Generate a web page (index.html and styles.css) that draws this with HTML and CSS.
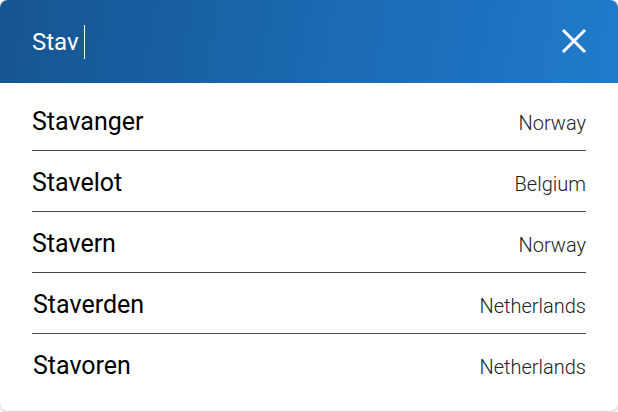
FILE: index.html
```html
<!DOCTYPE html>
<html>
<head>
<meta charset="utf-8">
<link rel="stylesheet" href="styles.css">
</head>
<body>
<div class="card">
  <header class="search">
    <div class="query"><span class="text">Stav</span><span class="caret"></span></div>
    <button class="close" aria-label="Close">
      <svg width="26" height="26" viewBox="0 0 26 26"><path d="M3 3 L23 23 M23 3 L3 23" stroke="#fff" stroke-width="3" stroke-linecap="square" fill="none"/></svg>
    </button>
  </header>
  <ul class="results">
    <li class="row"><span class="name">Stavanger</span><span class="country">Norway</span></li>
    <li class="row"><span class="name">Stavelot</span><span class="country">Belgium</span></li>
    <li class="row"><span class="name">Stavern</span><span class="country">Norway</span></li>
    <li class="row shift"><span class="name">Staverden</span><span class="country">Netherlands</span></li>
    <li class="row shift"><span class="name">Stavoren</span><span class="country">Netherlands</span></li>
  </ul>
</div>
</body>
</html>
```
FILE: styles.css
```css
* { box-sizing: border-box; }
html, body { margin: 0; padding: 0; background: #fff; }
body { width: 618px; height: 412px; overflow: hidden; font-family: Roboto, "Liberation Sans", sans-serif; }
.card {
  width: 618px;
  height: 411px;
  border-radius: 8px;
  overflow: hidden;
  background: #fff;
  box-shadow: 0 1px 3px rgba(0,0,0,0.25);
}
.search {
  height: 83px;
  background: linear-gradient(100deg, #15558f 0%, #1a68b0 50%, #207bcc 100%);
  display: flex;
  align-items: center;
  justify-content: space-between;
  padding: 0 31px 0 32px;
}
.query { display: flex; align-items: center; color: #fff; }
.text { font-size: 24px; line-height: 34px; }
.caret { width: 1px; height: 34px; background: #fff; margin-left: 5px; }
.close { background: none; border: 0; padding: 0; display: flex; margin-top: -1px; }
.results { list-style: none; margin: 0; padding: 7px 32px 0 32px; }
.row {
  display: flex;
  justify-content: space-between;
  align-items: baseline;
  padding: 18px 0 14px;
  line-height: 28px;
  border-bottom: 1px solid #4a4a4a;
}
.row:last-child { border-bottom: 0; }
.shift .name { margin-left: 1px; }
.name { font-size: 25px; color: #000; }
.country { font-size: 20px; line-height: 24px; font-weight: 300; color: #222; }
```
